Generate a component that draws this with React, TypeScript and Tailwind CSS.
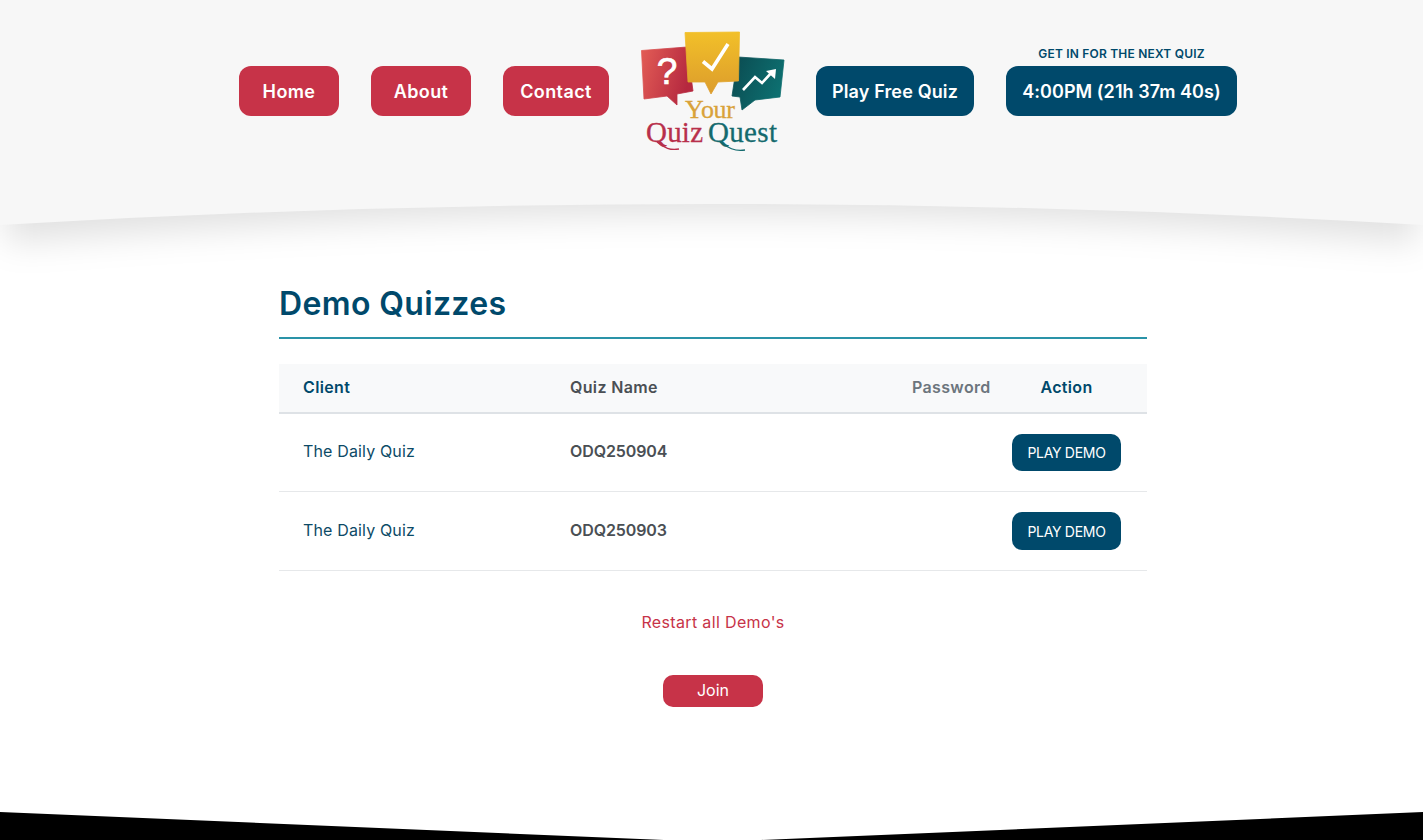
const navy = "bg-[#00496b]";

function Logo() {
  return (
    <svg width="143" height="122" viewBox="641 30 143 122" className="block shrink-0 overflow-visible">
      <defs>
        <linearGradient id="lr" x1="0" y1="0" x2="1" y2="0.3">
          <stop offset="0" stopColor="#e35d56" />
          <stop offset="1" stopColor="#b5283f" />
        </linearGradient>
        <linearGradient id="ly" x1="0" y1="0" x2="0" y2="1">
          <stop offset="0" stopColor="#f2c029" />
          <stop offset="1" stopColor="#dc9c2c" />
        </linearGradient>
        <linearGradient id="lt" x1="0" y1="0" x2="1" y2="0.4">
          <stop offset="0" stopColor="#0b4a50" />
          <stop offset="1" stopColor="#0d6f70" />
        </linearGradient>
      </defs>
      <path d="M641.5 50.5 L687 47 L693 91 L677 94 L677 105 L667 96 L644 99 Z" fill="url(#lr)" stroke="url(#lr)" strokeWidth="0.8" strokeLinejoin="round" />
      <path d="M738 57 L784 60 L780 97 L755 100 L742 110 L740 97 L732 96 Z" fill="url(#lt)" stroke="url(#lt)" strokeWidth="0.8" strokeLinejoin="round" />
      <path d="M685 32.5 L739.5 32 L738.5 81 L718 82 L711 94 L705 82 L688 82 Z" fill="url(#ly)" stroke="url(#ly)" strokeWidth="0.8" strokeLinejoin="round" />
      <path d="M703 61.5 L712 69 L728 44" fill="none" stroke="#fff" strokeWidth="3.6" />
      <text x="667" y="84" textAnchor="middle" fill="#fff" stroke="#fff" strokeWidth="0.7" fontSize="37" fontFamily="'Liberation Sans', sans-serif">?</text>
      <path d="M743 90 L755 77 L762 83 L773 71" fill="none" stroke="#fff" strokeWidth="2.6" />
      <path d="M766 71 L776 69 L775 79 Z" fill="#fff" />
      <text x="685" y="118" fill="#d9a23a" stroke="#d9a23a" strokeWidth="0.3" fontSize="26" fontFamily="'Liberation Serif', serif" textLength="50">Your</text>
      <text x="646" y="142" fill="#b8304b" stroke="#b8304b" strokeWidth="0.3" fontSize="29" fontFamily="'Liberation Serif', serif" textLength="57">Quiz</text>
      <text x="708" y="142" fill="#146a6e" stroke="#146a6e" strokeWidth="0.3" fontSize="29" fontFamily="'Liberation Serif', serif" textLength="69">Quest</text>
      <path d="M657 142 C663 146 668 151 679 149" fill="none" stroke="#b8304b" strokeWidth="1.3" />
      <path d="M720 142 C726 146 733 152 745 150" fill="none" stroke="#146a6e" strokeWidth="1.3" />
    </svg>
  );
}

function RedBtn({ label, w }: { label: string; w: string }) {
  return (
    <a className={`${w} h-[50px] shrink-0 flex items-center justify-center rounded-[12px] bg-[#c73348] text-white text-[18px] font-semibold tracking-[0.4px]`}>
      {label}
    </a>
  );
}

function Row({ name, h, pad, btn }: { name: string; h: string; pad: string; btn: string }) {
  return (
    <div className={`grid grid-cols-[267px_342px_100px_159px] items-center ${h} border-b border-[#e6e8ea]`}>
      <div className={`pl-6 ${pad} text-[16px] tracking-[0.15px] text-[#0c4a66]`}>The Daily Quiz</div>
      <div className={`pl-6 ${pad} text-[16px] font-semibold tracking-[-0.1px] text-[#4a4f54]`}>{name}</div>
      <div />
      <div className="pl-6">
        <a className={`${navy} flex w-[109px] ${btn} items-center justify-center rounded-[10px] text-white text-[14px] tracking-[-0.3px]`}>PLAY DEMO</a>
      </div>
    </div>
  );
}

export default function App() {
  return (
    <div className="h-[840px] overflow-hidden bg-white flex flex-col font-['Inter','Liberation_Sans',sans-serif]">
      <header className="bg-[#f7f7f7] h-[204px] shrink-0 pt-[30px] pl-[239px]">
        <div className="flex items-center gap-8 h-[122px]">
          <RedBtn label="Home" w="w-[100px]" />
          <RedBtn label="About" w="w-[100px]" />
          <RedBtn label="Contact" w="w-[106px]" />
          <Logo />
          <a className={`${navy} w-[158px] h-[50px] shrink-0 flex items-center justify-center rounded-[12px] text-white text-[18px] font-semibold tracking-[0.15px]`}>Play Free Quiz</a>
          <div className="relative">
            <div className="absolute -top-[21px] left-0 right-0 text-center text-[12px] leading-[18px] font-semibold tracking-[0.2px] text-[#00496b] whitespace-nowrap">GET IN FOR THE NEXT QUIZ</div>
            <a className={`${navy} w-[231px] h-[50px] flex items-center justify-center rounded-[12px] text-white text-[18px] font-semibold tracking-[0.05px] whitespace-nowrap`}>4:00PM (21h 37m 40s)</a>
          </div>
        </div>
      </header>

      <svg viewBox="0 0 1423 70" className="block w-full h-[70px] shrink-0" preserveAspectRatio="none">
        <defs>
          <filter id="bl" x="-5%" y="-100%" width="110%" height="300%">
            <feGaussianBlur stdDeviation="17" />
          </filter>
          <clipPath id="cp"><rect x="0" y="0" width="1423" height="70" /></clipPath>
        </defs>
        <g clipPath="url(#cp)">
          <path d="M6 -40 L1417 -40 L1417 38 Q711.5 -18 6 38 Z" fill="#000" fillOpacity="0.12" filter="url(#bl)" />
          <path d="M0 0 L1423 0 L1423 21 Q711.5 -21 0 21 Z" fill="#f7f7f7" />
        </g>
      </svg>

      <main className="w-[868px] ml-[279px] shrink-0">
        <h1 className="text-[32px] leading-[60px] font-semibold tracking-[0.35px] text-[#00496b] h-[65px] border-b-2 border-[#2a93a8] mb-[25px]">Demo Quizzes</h1>
        <div className="grid grid-cols-[267px_342px_100px_159px] items-center h-[50px] pb-[2px] bg-[#f8f9fa] border-b-2 border-[#dee2e6] text-[16px] font-semibold tracking-[0.35px]">
          <div className="pl-6 text-[#00496b]">Client</div>
          <div className="pl-6 text-[#4a4f54]">Quiz Name</div>
          <div className="pl-6 text-[#6c757d] whitespace-nowrap">Password</div>
          <div className="pl-6"><div className="w-[109px] text-center text-[#00496b]">Action</div></div>
        </div>
        <Row name="ODQ250904" h="h-[78px]" pad="pb-[4px]" btn="h-[37px]" />
        <Row name="ODQ250903" h="h-[79px]" pad="pb-[2px]" btn="h-[38px]" />
        <div className="mt-[39px] text-center text-[16px] leading-[24px] tracking-[0.35px] text-[#c73348]">Restart all Demo's</div>
        <a className="mt-[41px] mx-auto flex w-[100px] h-[32px] pb-[2px] items-center justify-center rounded-[10px] bg-[#c73348] text-white text-[16px]">Join</a>
      </main>

      <footer className="mt-auto h-[28px] shrink-0">
        <svg viewBox="0 0 1423 28" className="block w-full h-[28px]">
          <path d="M0 0 L664 28 L0 28 Z M1423 0 L761 28 L1423 28 Z" fill="#000" />
        </svg>
      </footer>
    </div>
  );
}
